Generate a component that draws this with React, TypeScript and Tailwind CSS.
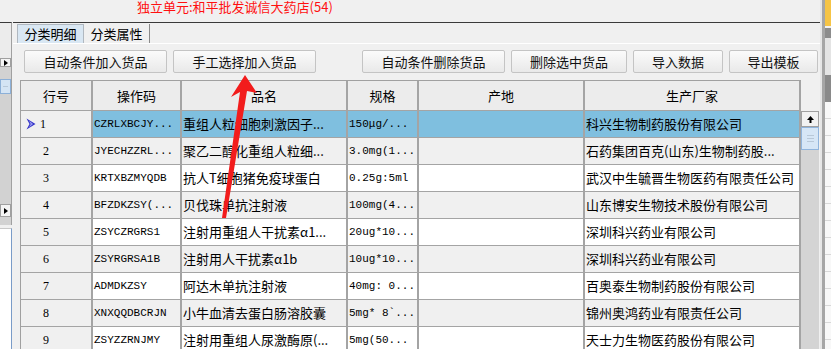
import { clsx } from 'clsx'

const ROWS = [
  { n: 1, code: 'CZRLXBCJY...', name: '重组人粒细胞刺激因子...', spec: '150μg/...', maker: '科兴生物制药股份有限公司' },
  { n: 2, code: 'JYECHZZRL...', name: '聚乙二醇化重组人粒细...', spec: '3.0mg(1...', maker: '石药集团百克(山东)生物制药股...' },
  { n: 3, code: 'KRTXBZMYQDB', name: '抗人T细胞猪免疫球蛋白', spec: '0.25g:5ml', maker: '武汉中生毓晋生物医药有限责任公司' },
  { n: 4, code: 'BFZDKZSY(...', name: '贝伐珠单抗注射液', spec: '100mg(4...', maker: '山东博安生物技术股份有限公司' },
  { n: 5, code: 'ZSYCZRGRS1', name: '注射用重组人干扰素α1...', spec: '20ug*10...', maker: '深圳科兴药业有限公司' },
  { n: 6, code: 'ZSYRGRSΑ1B', name: '注射用人干扰素α1b', spec: '10ug*10...', maker: '深圳科兴药业有限公司' },
  { n: 7, code: 'ADMDKZSY', name: '阿达木单抗注射液', spec: '40mg: 0...', maker: '百奥泰生物制药股份有限公司' },
  { n: 8, code: 'XNXQQDBCRJN', name: '小牛血清去蛋白肠溶胶囊', spec: '5mg* 8`...', maker: '锦州奥鸿药业有限责任公司' },
  { n: 9, code: 'ZSYZZRNJMY', name: '注射用重组人尿激酶原(...', spec: '5mg(50...', maker: '天士力生物医药股份有限公司' },
]

const HEADERS = ['行号', '操作码', '品名', '规格', '产地', '生产厂家']

function Btn({ label, w, className }: { label: string; w: string; className?: string }) {
  return (
    <div
      className={clsx(
        'h-[23px] shrink-0 flex items-center justify-center text-[13px] text-[#111] border border-[#c4c4c4] rounded-[2px] bg-gradient-to-b from-[#fbfbfb] to-[#e9e9e9]',
        w,
        className,
      )}
    >
      {label}
    </div>
  )
}

function Grip() {
  return (
    <div className="flex flex-col gap-[2px] items-center">
      <div className="w-[7px] h-px bg-[#b8c8d8]" />
      <div className="w-[7px] h-px bg-[#b8c8d8]" />
      <div className="w-[7px] h-px bg-[#b8c8d8]" />
    </div>
  )
}

export default function App() {
  return (
    <div className="w-[831px] h-[349px] bg-[#f0f0f0] overflow-hidden relative flex font-['Noto_Sans_CJK_SC',sans-serif]">
      <div className="w-[820px] h-[349px] flex flex-col overflow-hidden">
        {/* title */}
        <div className="h-[22px] shrink-0 pl-[137px] text-[13px] text-[#ff1010] leading-[14px]">
          独立单元:和平批发诚信大药店(54)
        </div>

        <div className="flex flex-1 min-h-0">
          {/* left panel */}
          <div className="w-[13px] shrink-0 flex flex-col">
            <div className="h-[203px] shrink-0 w-[12px] border-t border-[#3a3a3a] border-r border-r-[#a0a0a0] flex flex-col">
              <div className="h-[35px] bg-[#ececec]" />
              <div className="h-[9px] bg-[#f4f4f4] border border-[#a0a0a0] flex items-center justify-center">
                <div className="w-0 h-0 border-y-[3px] border-y-transparent border-l-[4px] border-l-black" />
              </div>
              <div className="flex-1 bg-[#d2d2d2] flex flex-col">
                <div className="h-[12px]" />
                <div className="h-[15px] bg-[#d4e4f4] border border-[#8cb0d8] flex items-center justify-center">
                  <div className="w-[5px] h-px bg-[#b8c8d8]" />
                </div>
                <div className="flex-1" />
                <div className="h-[13px] bg-[#f4f4f4] border border-[#a0a0a0] flex items-center justify-center">
                  <div className="w-0 h-0 border-y-[3px] border-y-transparent border-l-[4px] border-l-black" />
                </div>
                <div className="h-[8px]" />
              </div>
            </div>
            <div className="h-[3px] shrink-0" />
            <div className="flex-1 w-[12px] bg-white border-r border-[#7a9cc8] border-t border-t-[#c8c8c8]" />
          </div>

          {/* main */}
          <div className="flex-1 border-t border-[#3a3a3a] flex flex-col min-h-0">
            {/* tabs */}
            <div className="h-[20px] shrink-0 pl-[4px] flex items-end">
              <div className="h-[19px] w-[67px] bg-[#d9e7f3] border border-b-0 border-[#b0b8c0] flex items-center justify-center text-[13px]">
                分类明细
              </div>
              <div className="h-[19px] w-[66px] border-r border-[#8a8a8a] flex items-center justify-center text-[13px]">
                分类属性
              </div>
            </div>

            {/* tab page */}
            <div className="flex-1 min-h-0 border-t border-white bg-[#f0f0f0] flex flex-col">
              <div className="pt-[6px] pl-[11px] flex shrink-0">
                <Btn label="自动条件加入货品" w="w-[143px]" />
                <Btn label="手工选择加入货品" w="w-[143px]" className="ml-[6px]" />
                <Btn label="自动条件删除货品" w="w-[143px]" className="ml-[46px]" />
                <Btn label="删除选中货品" w="w-[116px]" className="ml-[6px]" />
                <Btn label="导入数据" w="w-[90px]" className="ml-[6px]" />
                <Btn label="导出模板" w="w-[89px]" className="ml-[6px]" />
              </div>

              <div className="mt-[7px] pl-[7px] flex shrink-0">
                {/* grid */}
                <div className="w-[781px] shrink-0 border-l border-t border-[#a0a0a0] grid grid-cols-[72px_89px_166px_71px_166px_216px] auto-rows-min">
                  {HEADERS.map(h => (
                    <div
                      key={h}
                      className="h-[30px] bg-[#ececec] border-r-2 border-b border-[#a4a4a4] flex items-center justify-center text-[13px] text-black"
                    >
                      {h}
                    </div>
                  ))}
                  {ROWS.map((r, i) => {
                    const bg = i === 0 ? 'bg-[#7fbfdf]' : i % 2 === 1 ? 'bg-[#f0f0f0]' : 'bg-white'
                    const cell = clsx('h-[27px] border-r-2 border-b border-[#a4a4a4] flex items-center overflow-hidden whitespace-nowrap text-black', bg)
                    return [
                      <div key={`n${r.n}`} className="h-[27px] bg-[#f0f0f0] border-r-2 border-b border-[#a4a4a4] flex items-center pl-[5px] text-[12px] font-['Liberation_Serif',serif]">
                        <span className="w-[13px] flex items-center">
                          {i === 0 && (
                            <svg width="10" height="12" viewBox="0 0 10 12">
                              <path d="M0.5 0.5 L9.5 6 L0.5 11.5 L3.5 6 Z" fill="#3434c8" />
                              <path d="M3 2.5 L7 6 L3 9.5 L4.6 6 Z" fill="#9a9af0" />
                            </svg>
                          )}
                        </span>
                        <span className={clsx(i === 0 ? 'ml-[1px]' : 'ml-[4px]')}>{r.n}</span>
                      </div>,
                      <div key={`c${r.n}`} className={clsx(cell, "pl-[1px] text-[11px] font-['Liberation_Mono',monospace]")}>
                        {r.code}
                      </div>,
                      <div key={`m${r.n}`} className={clsx(cell, 'pl-[1px] text-[13px]')}>
                        {r.name}
                      </div>,
                      <div key={`s${r.n}`} className={clsx(cell, "pl-[1px] text-[11px] font-['Liberation_Mono','Noto_Sans_CJK_SC',monospace]")}>
                        {r.spec}
                      </div>,
                      <div key={`p${r.n}`} className={cell} />,
                      <div key={`f${r.n}`} className={clsx(cell, 'pl-[1px] text-[13px]')}>
                        {r.maker}
                      </div>,
                    ]
                  })}
                </div>

                {/* vertical scrollbar */}
                <div className="w-[18px] shrink-0 pt-[31px] flex flex-col">
                  <div className="h-[16px] bg-[#f2f2f2] border border-[#a0a0a0] flex items-center justify-center">
                    <svg width="7" height="7" viewBox="0 0 7 7">
                      <path d="M3.5 0 L7 4 L4.5 4 L4.5 7 L2.5 7 L2.5 4 L0 4 Z" fill="#000" />
                    </svg>
                  </div>
                  <div className="h-[23px] bg-[#d6e6f6] border border-[#90b4dc] flex items-center justify-center">
                    <Grip />
                  </div>
                  <div className="h-[300px] bg-[#d4d4d4]" />
                </div>
              </div>
            </div>
          </div>
        </div>
      </div>

      {/* right strip */}
      <div className="w-[11px] shrink-0 flex">
        <div className="w-[2px] bg-[#e6e6e6]" />
        <div className="w-[3px] bg-[#a6a6a6]" />
        <div className="flex-1 flex flex-col">
          <div className="h-[26px] shrink-0 bg-[#f6c445]" />
          <div className="h-[2px] shrink-0 bg-[#f0f0f0]" />
          <div className="h-[10px] shrink-0 bg-[#8c8c8c]" />
          <div className="h-[37px] shrink-0 bg-[#e4e4e4]" />
          <div className="h-[27px] shrink-0 bg-[#8a8a8a]" />
          <div className="h-[16px] shrink-0 bg-[#f8f8f8]" />
          {[0, 1, 2, 3, 4, 5, 6, 7, 8, 9, 10, 11, 12, 13].map(k => (
            <div key={k} className="h-[17px] shrink-0 bg-[#f8f8f8] border-t border-[#d8d8d8]" />
          ))}
        </div>
      </div>

      {/* red annotation arrow */}
      <svg className="absolute left-0 top-0 pointer-events-none" width="831" height="349" viewBox="0 0 831 349">
        <polygon points="245,75 257,93 247,91 226,218 222,218 240,92 231,97" fill="#f21c1c" />
      </svg>
    </div>
  )
}
